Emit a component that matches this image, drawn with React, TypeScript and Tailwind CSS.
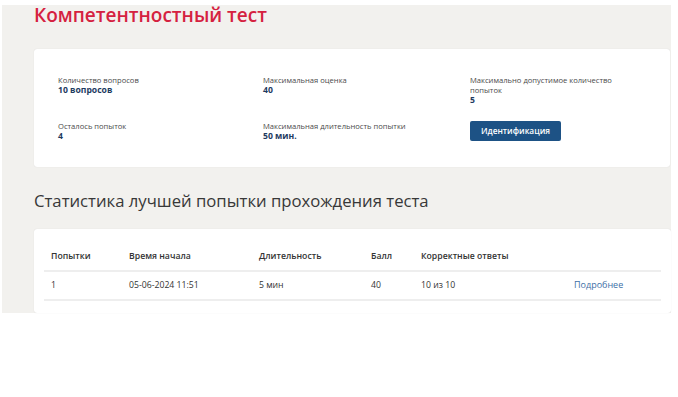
import React from "react";

interface InfoItem {
  label: string;
  value: string;
}

interface AttemptRow {
  attempt: string;
  startedAt: string;
  duration: string;
  score: string;
  correct: string;
}

const rows: AttemptRow[] = [
  {
    attempt: "1",
    startedAt: "05-06-2024 11:51",
    duration: "5 мин",
    score: "40",
    correct: "10 из 10",
  },
];

const Info: React.FC<InfoItem> = ({ label, value }) => (
  <div>
    <p className="text-[7.6px] leading-[10px] text-[#4a4a4a]">{label}</p>
    <p className="text-[8.6px] leading-[10px] font-bold text-[#1e3a5f]">
      {value}
    </p>
  </div>
);

export default function App() {
  return (
    <div
      className="min-h-[397px] bg-white pl-[2px] pt-[5px]"
      style={{ fontFamily: '"Open Sans", "Noto Sans", sans-serif' }}
    >
      <div className="w-[669px] h-[308px] bg-[#f2f1ee] pl-[32px]">
        {/* Title */}
        <h1 className="text-[19px] leading-[20px] font-semibold text-[#d52140]">
          Компетентностный тест
        </h1>

        {/* Test info card */}
        <div className="mt-[24px] w-[636px] bg-white rounded-[3px] shadow-[0_0_1px_rgba(0,0,0,0.15)] px-[24px] pt-[26px] pb-[26px]">
          <div className="grid grid-cols-[205px_207px_160px] gap-y-[16px]">
            <Info label="Количество вопросов" value="10 вопросов" />
            <Info label="Максимальная оценка" value="40" />
            <Info
              label="Максимально допустимое количество попыток"
              value="5"
            />
            <Info label="Осталось попыток" value="4" />
            <Info label="Максимальная длительность попытки" value="50 мин." />
            <div>
              <button className="block h-[20px] w-[91px] rounded-[2px] bg-[#1d5285] text-white text-[8.3px] leading-[20px] font-semibold">
                Идентификация
              </button>
            </div>
          </div>
        </div>

        {/* Stats heading */}
        <h2 className="mt-[21px] text-[16.7px] leading-[26px] text-[#383838]">
          Статистика лучшей попытки прохождения теста
        </h2>

        {/* Stats table card */}
        <div className="mt-[15px] w-[637px] bg-white rounded-[3px] shadow-[0_0_1px_rgba(0,0,0,0.15)] px-[10px] pt-[15px] pb-[12px]">
          <table className="w-full text-[8.7px] text-[#333333] border-collapse">
            <thead>
              <tr className="h-[27px] border-b-2 border-[#eeeeee] text-left">
                <th className="pl-[7px] w-[85px] font-semibold">Попытки</th>
                <th className="w-[130px] font-semibold">Время начала</th>
                <th className="w-[112px] font-semibold">Длительность</th>
                <th className="w-[50px] font-semibold">Балл</th>
                <th className="w-[153px] font-semibold">Корректные ответы</th>
                <th></th>
              </tr>
            </thead>
            <tbody>
              {rows.map((row) => (
                <tr key={row.attempt} className="h-[29px] border-b-2 border-[#eeeeee]">
                  <td className="pl-[7px]">{row.attempt}</td>
                  <td>{row.startedAt}</td>
                  <td>{row.duration}</td>
                  <td>{row.score}</td>
                  <td>{row.correct}</td>
                  <td>
                    <a className="text-[9px] text-[#3d6fa6] cursor-pointer">Подробнее</a>
                  </td>
                </tr>
              ))}
            </tbody>
          </table>
        </div>
      </div>
    </div>
  );
}
